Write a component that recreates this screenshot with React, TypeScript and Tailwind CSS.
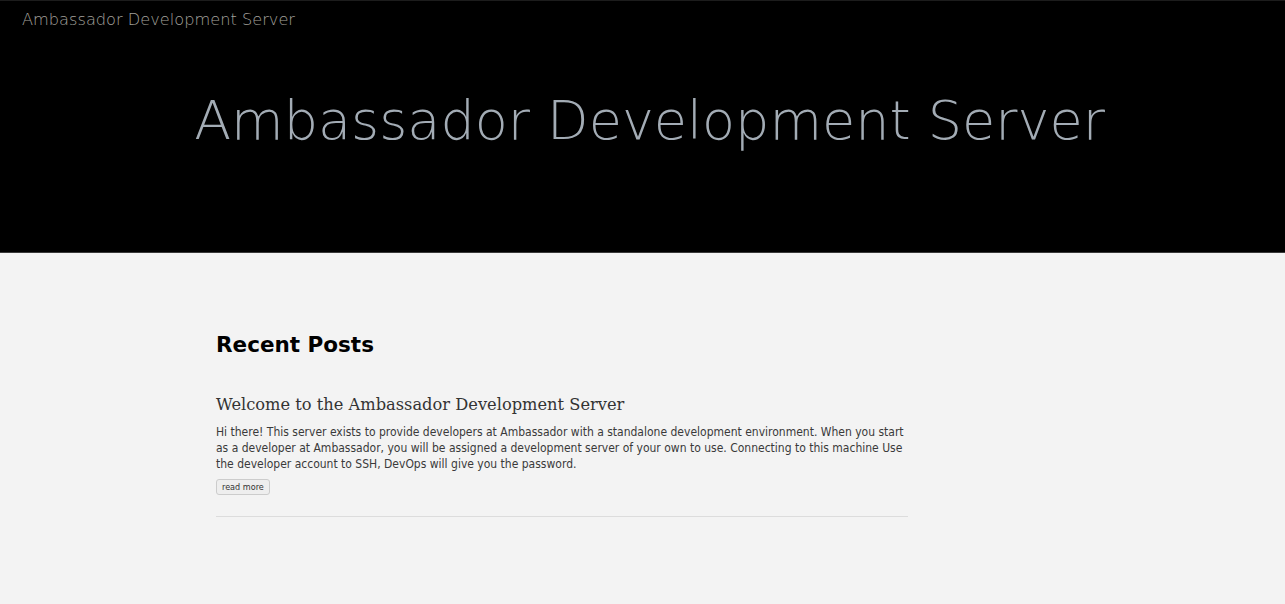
export default function App() {
  return (
    <div className="min-h-[604px] bg-[#f3f3f3]">
      <header className="bg-black border-t border-[#1c1c1c] h-[253px] flex flex-col border-b border-b-[#3a3a3a]">
        <div className="pl-[22px] pt-[8px] text-[16.2px] leading-[22px] text-[#a3a09c] font-['DejaVu_Sans',sans-serif] font-extralight">
          Ambassador Development Server
        </div>
        <div className="flex justify-center pt-[58px] pl-[14px]">
          <h1 className="text-[54px] leading-[64px] text-[#a3acb5] font-['DejaVu_Sans',sans-serif] font-extralight">
            Ambassador Development Server
          </h1>
        </div>
      </header>
      <main className="ml-[216px] w-[692px] pt-[78px]">
        <h2 className="text-[21.5px] leading-[28px] font-bold text-black font-['DejaVu_Sans',sans-serif]">
          Recent Posts
        </h2>
        <article className="mt-[35px] pb-[20px] border-b border-[#dcdcdc]">
          <h3 className="text-[16.25px] leading-[22px] text-[#333] font-['DejaVu_Serif',serif]">
            Welcome to the Ambassador Development Server
          </h3>
          <p className="mt-[8px] text-[12px] leading-[16px] text-[#3a3a3a] font-['DejaVu_Sans_Condensed','DejaVu_Sans',sans-serif]" style={{ fontStretch: "condensed" }}>
            Hi there! This server exists to provide developers at Ambassador with a standalone development environment. When you start as a developer at Ambassador, you will be assigned a development server of your own to use. Connecting to this machine Use the developer account to SSH, DevOps will give you the password.
          </p>
          <button className="mt-[4px] px-[5px] h-[16px] text-[9px] leading-[14px] text-[#333] bg-[#eeeeee] border border-[#cccccc] rounded-[3px] font-['DejaVu_Sans_Condensed','DejaVu_Sans',sans-serif]" style={{ fontStretch: "condensed" }}>
            read more
          </button>
        </article>
      </main>
    </div>
  );
}
